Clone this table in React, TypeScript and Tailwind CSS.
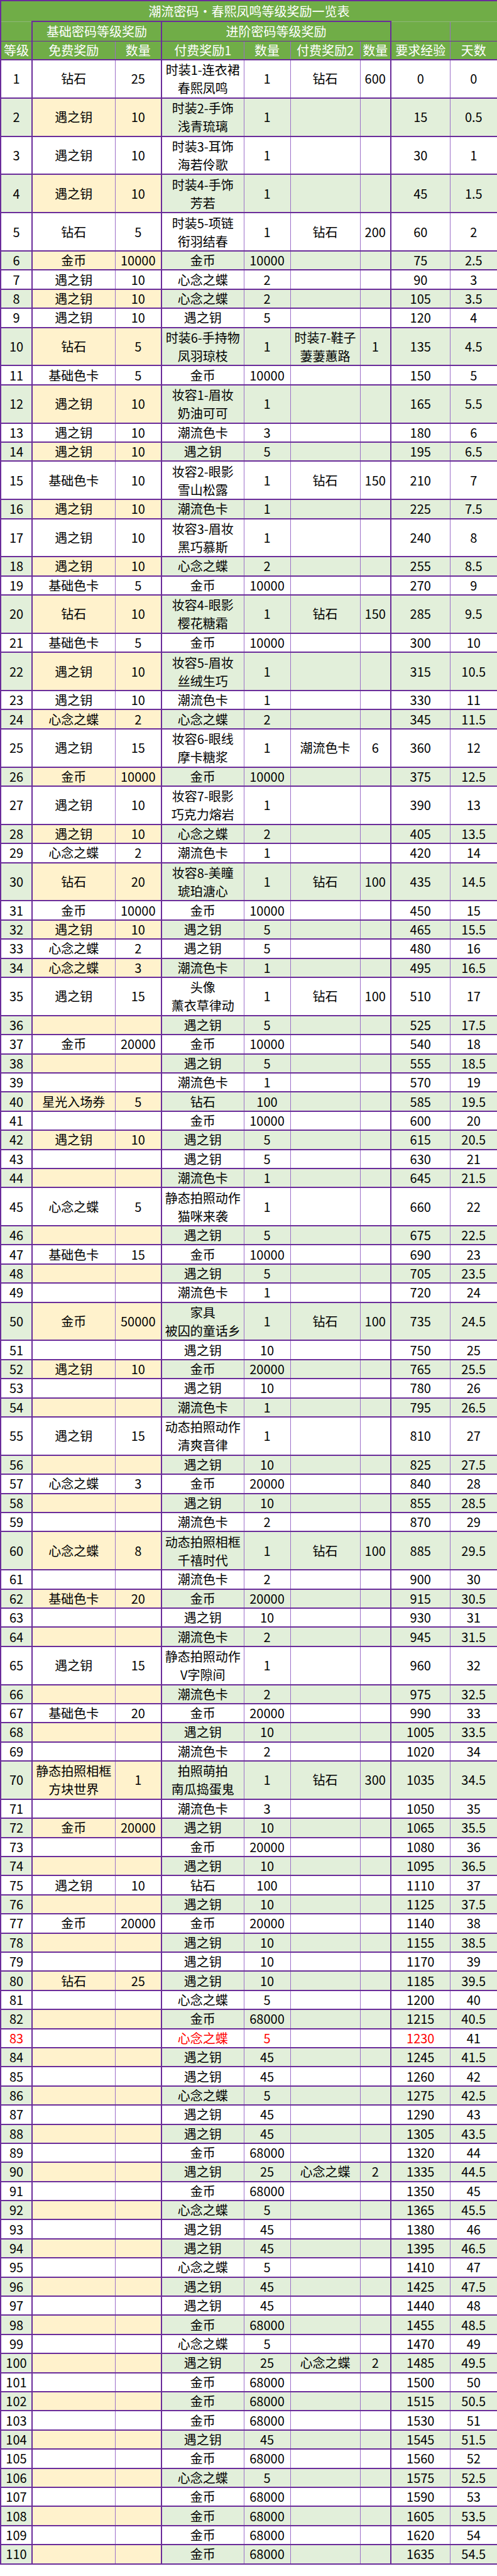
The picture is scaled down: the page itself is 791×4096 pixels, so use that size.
import React from "react";

const DATA = `钻石,25,时装1-连衣裙/春熙凤鸣,1,钻石,600
遇之钥,10,时装2-手饰/浅青琉璃,1,,
遇之钥,10,时装3-耳饰/海若伶歌,1,,
遇之钥,10,时装4-手饰/芳若,1,,
钻石,5,时装5-项链/衔羽结春,1,钻石,200
金币,10000,金币,10000,,
遇之钥,10,心念之蝶,2,,
遇之钥,10,心念之蝶,2,,
遇之钥,10,遇之钥,5,,
钻石,5,时装6-手持物/凤羽琼枝,1,时装7-鞋子/萋萋蕙路,1
基础色卡,5,金币,10000,,
遇之钥,10,妆容1-眉妆/奶油可可,1,,
遇之钥,10,潮流色卡,3,,
遇之钥,10,遇之钥,5,,
基础色卡,10,妆容2-眼影/雪山松露,1,钻石,150
遇之钥,10,潮流色卡,1,,
遇之钥,10,妆容3-眉妆/黑巧慕斯,1,,
遇之钥,10,心念之蝶,2,,
基础色卡,5,金币,10000,,
钻石,10,妆容4-眼影/樱花糖霜,1,钻石,150
基础色卡,5,金币,10000,,
遇之钥,10,妆容5-眉妆/丝绒生巧,1,,
遇之钥,10,潮流色卡,1,,
心念之蝶,2,心念之蝶,2,,
遇之钥,15,妆容6-眼线/摩卡糖浆,1,潮流色卡,6
金币,10000,金币,10000,,
遇之钥,10,妆容7-眼影/巧克力熔岩,1,,
遇之钥,10,心念之蝶,2,,
心念之蝶,2,潮流色卡,1,,
钻石,20,妆容8-美瞳/琥珀溏心,1,钻石,100
金币,10000,金币,10000,,
遇之钥,10,遇之钥,5,,
心念之蝶,2,遇之钥,5,,
心念之蝶,3,潮流色卡,1,,
遇之钥,15,头像/薰衣草律动,1,钻石,100
,,遇之钥,5,,
金币,20000,金币,10000,,
,,遇之钥,5,,
,,潮流色卡,1,,
星光入场券,5,钻石,100,,
,,金币,10000,,
遇之钥,10,遇之钥,5,,
,,遇之钥,5,,
,,潮流色卡,1,,
心念之蝶,5,静态拍照动作/猫咪来袭,1,,
,,遇之钥,5,,
基础色卡,15,金币,10000,,
,,遇之钥,5,,
,,潮流色卡,1,,
金币,50000,家具/被囚的童话乡,1,钻石,100
,,遇之钥,10,,
遇之钥,10,金币,20000,,
,,遇之钥,10,,
,,潮流色卡,1,,
遇之钥,15,动态拍照动作/清爽音律,1,,
,,遇之钥,10,,
心念之蝶,3,金币,20000,,
,,遇之钥,10,,
,,潮流色卡,2,,
心念之蝶,8,动态拍照相框/千禧时代,1,钻石,100
,,潮流色卡,2,,
基础色卡,20,金币,20000,,
,,遇之钥,10,,
,,潮流色卡,2,,
遇之钥,15,静态拍照动作/V字隙间,1,,
,,潮流色卡,2,,
基础色卡,20,金币,20000,,
,,遇之钥,10,,
,,潮流色卡,2,,
静态拍照相框/方块世界,1,拍照萌拍/南瓜捣蛋鬼,1,钻石,300
,,潮流色卡,3,,
金币,20000,遇之钥,10,,
,,金币,20000,,
,,遇之钥,10,,
遇之钥,10,钻石,100,,
,,遇之钥,10,,
金币,20000,金币,20000,,
,,遇之钥,10,,
,,遇之钥,10,,
钻石,25,遇之钥,10,,
,,心念之蝶,5,,
,,金币,68000,,
,,心念之蝶,5,,
,,遇之钥,45,,
,,遇之钥,45,,
,,心念之蝶,5,,
,,遇之钥,45,,
,,遇之钥,45,,
,,金币,68000,,
,,遇之钥,25,心念之蝶,2
,,金币,68000,,
,,心念之蝶,5,,
,,遇之钥,45,,
,,遇之钥,45,,
,,心念之蝶,5,,
,,遇之钥,45,,
,,遇之钥,45,,
,,金币,68000,,
,,心念之蝶,5,,
,,遇之钥,25,心念之蝶,2
,,金币,68000,,
,,金币,68000,,
,,金币,68000,,
,,遇之钥,45,,
,,金币,68000,,
,,心念之蝶,5,,
,,金币,68000,,
,,金币,68000,,
,,金币,68000,,
,,金币,68000,,`;

const rows = DATA.split("\n").map((l) => l.split(","));

const thinR = "border-r border-r-[#9b6fc8]";
const thickR = "border-r-2 border-r-[#6a2c9a]";
const rightCls = [thickR, thinR, thickR, thinR, thinR, thinR, thickR, thinR, thickR];

function Cell({ text, cls }: { text: string; cls: string }) {
  const parts = text.split("/");
  return (
    <td className={`p-0 text-center align-middle whitespace-nowrap leading-[24px] ${cls}`}>
      {parts.length > 1 ? (
        <div className="leading-[29px]">
          {parts[0]}
          <br />
          {parts[1]}
        </div>
      ) : (
        text
      )}
    </td>
  );
}

export default function App() {
  const hdr = "bg-[#70ad47] text-white p-0 text-center align-middle whitespace-nowrap leading-[24px]";
  return (
    <div className="w-[791px] bg-white font-['Noto_Sans_CJK_SC',sans-serif] text-[20px] text-black">
      <table className="w-[791px] table-fixed border-collapse border-2 border-[#6a2c9a]">
        <colgroup>
          <col className="w-[50px]" />
          <col className="w-[132px]" />
          <col className="w-[74px]" />
          <col className="w-[131px]" />
          <col className="w-[74px]" />
          <col className="w-[111px]" />
          <col className="w-[49px]" />
          <col className="w-[94px]" />
          <col className="w-[76px]" />
        </colgroup>
        <tbody>
          <tr className="h-[33px]">
            <td colSpan={9} className={`${hdr} border-b border-b-[#8fb87a]`}>
              潮流密码·春熙凤鸣等级奖励一览表
            </td>
          </tr>
          <tr className="h-[31px]">
            <td className={`${hdr} ${thickR} border-b border-b-[#6a2c9a]`}></td>
            <td colSpan={2} className={`${hdr} ${thickR} border-t-2 border-t-[#6a2c9a] border-b border-b-[#6a2c9a]`}>
              基础密码等级奖励
            </td>
            <td colSpan={4} className={`${hdr} ${thickR} border-t-2 border-t-[#6a2c9a] border-b border-b-[#6a2c9a]`}>
              进阶密码等级奖励
            </td>
            <td className={`${hdr} ${thinR} border-b border-b-[#6a2c9a]`}></td>
            <td className={`${hdr} border-b border-b-[#6a2c9a]`}></td>
          </tr>
          <tr className="h-[30px]">
            {["等级", "免费奖励", "数量", "付费奖励1", "数量", "付费奖励2", "数量", "要求经验", "天数"].map((t, i) => (
              <td key={i} className={`${hdr} ${rightCls[i]} border-b-2 border-b-[#6a2c9a]`}>
                {t}
              </td>
            ))}
          </tr>
          {rows.map((r, idx) => {
            const n = idx + 1;
            const even = n % 2 === 0;
            const two = r.some((c) => c.includes("/"));
            const exp = String(15 * (n - 1));
            const days = String((n - 1) / 2);
            const cells = [String(n), r[0], r[1], r[2], r[3], r[4], r[5], exp, days];
            const red = n === 83;
            return (
              <tr key={n} className={two ? "h-[60.8px]" : "h-[30.4px]"}>
                {cells.map((c, i) => {
                  const bg = even ? (i === 1 || i === 2 ? "bg-[#fff2cc]" : "bg-[#e2efda]") : "bg-white";
                  const color = red && i !== 8 ? "text-[#ff0000]" : "";
                  return (
                    <Cell
                      key={i}
                      text={c}
                      cls={`${bg} ${color} ${rightCls[i]} border-b-2 border-b-[#6a2c9a]`}
                    />
                  );
                })}
              </tr>
            );
          })}
        </tbody>
      </table>
    </div>
  );
}
